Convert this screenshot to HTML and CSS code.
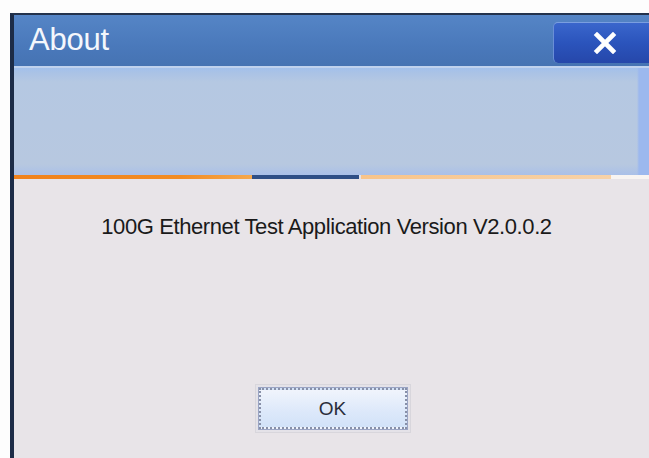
FILE: index.html
```html
<!DOCTYPE html>
<html>
<head>
<meta charset="utf-8">
<link rel="stylesheet" href="styles.css">
</head>
<body>
<div class="dialog">
  <div class="titlebar">
    <span class="title">About</span>
    <button class="close" aria-label="Close">
      <svg width="24" height="22" viewBox="0 0 24 22"><path d="M4 3 L20 19 M20 3 L4 19" stroke="#fff" stroke-width="4.6" stroke-linecap="square"/></svg>
    </button>
  </div>
  <div class="banner"></div>
  <div class="rule">
    <span class="seg seg-orange"></span>
    <span class="seg seg-blue"></span>
    <span class="seg seg-pale"></span>
    <span class="seg seg-white"></span>
  </div>
  <div class="content">
    <p class="message">100G Ethernet Test Application Version V2.0.0.2</p>
    <div class="actions">
      <button class="ok"><span class="ok-face">OK</span></button>
    </div>
  </div>
</div>
</body>
</html>
```
FILE: styles.css
```css
html, body {
  margin: 0;
  padding: 0;
  background: #fdfdfd;
  width: 649px;
  height: 458px;
  overflow: hidden;
}

.dialog {
  margin: 13px 0 0 10px;
  height: 445px;
  border-left: 4px solid #1d2c47;
  border-top: 2px solid #23324c;
  display: flex;
  flex-direction: column;
  font-family: "Liberation Sans", Arial, sans-serif;
}

.titlebar {
  height: 51px;
  background: linear-gradient(#5585c6, #4a79bb 60%, #4673b3);
  display: flex;
  align-items: flex-start;
  justify-content: space-between;
}

.title {
  color: #f4f7fc;
  font-size: 31px;
  line-height: 34px;
  margin: 8px 0 0 15px;
  letter-spacing: -0.2px;
}

.close {
  margin-top: 7px;
  width: 96px;
  height: 41px;
  border: none;
  border-top: 1px solid #7a9ee0;
  border-left: 1px solid #6a8ed6;
  border-radius: 5px 0 0 5px;
  background: linear-gradient(#3a66cc, #2b54bc 50%, #2647aa);
  display: flex;
  align-items: center;
  justify-content: center;
  padding: 0 0 0 6px;
}

.banner {
  height: 107px;
  background:
    linear-gradient(90deg, rgba(255,255,255,0) 623px, #9cb8ee 625px),
    linear-gradient(#a3c0ec 0, #a9c2e6 4px, #b5c8e2 14px, #b7c8e0 90%, #aac0e8 100%);
  border-top: 2px solid #c0d2ee;
}

.rule {
  height: 4px;
  display: flex;
  background: #e6e2e6;
}

.seg { display: block; height: 100%; }
.seg-orange { width: 238px; background: linear-gradient(90deg, #f0821c 0, #f28c24 70%, #f5a84e 100%); }
.seg-blue { width: 107px; background: #2f4f86; }
.seg-pale { width: 250px; margin-left: 2px; background: linear-gradient(90deg, #f8c48a, #f7d2a8); }
.seg-white { flex: 1; background: #f8f4f2; }

.content {
  flex: 1;
  background: #e8e4e8;
  display: flex;
  flex-direction: column;
  align-items: center;
}

.message {
  margin: 35px 0 0 0;
  font-size: 22px;
  line-height: 25px;
  color: #1a1a1a;
  letter-spacing: -0.4px;
  padding-right: 10px;
}

.actions {
  margin-top: 145px;
  padding-left: 2px;
}

.ok {
  width: 156px;
  height: 49px;
  padding: 3px;
  border: 1px solid #d8d6dc;
  background: #e4e2e8;
  box-sizing: border-box;
  font-family: inherit;
}

.ok-face {
  display: flex;
  align-items: center;
  justify-content: center;
  height: 100%;
  box-sizing: border-box;
  border: 2px dotted #8890a8;
  outline: 1px solid #9aa4c4;
  background: linear-gradient(#f0f4fc, #dce8fa 60%, #d2e2f8);
  font-size: 19px;
  color: #2a2e3a;
}
```
